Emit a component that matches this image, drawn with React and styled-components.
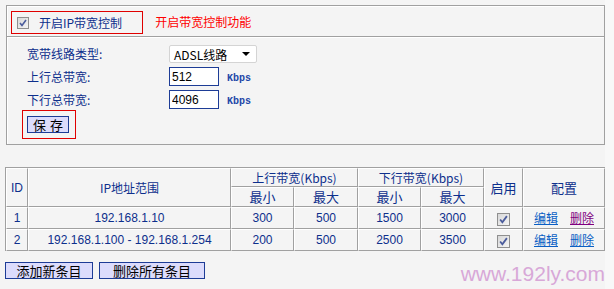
import React from 'react';
import styled, { createGlobalStyle } from 'styled-components';

const GlobalStyle = createGlobalStyle`
    html, body {
        margin: 0;
        padding: 0;
        background-color: #f4f4f4;
    }
    body {
        font-family: "Noto Sans CJK SC", "DejaVu Sans", sans-serif;
        font-size: 12px;
        color: #0d2f8c;
    }
`;

const Page = styled.div`
    position: relative;
    width: 614px;
    height: 289px;
    padding: 5px 9px 0 5px;
    box-sizing: border-box;
    background: linear-gradient(to right, #f4f4f4 605px, #f8f8f8 605px);
`;

const Panel = styled.div`
    margin-left: 1px;
    border: 1px solid #a0a0a0;
    box-shadow: inset 1px 1px 0 #ffffff;
    height: 140px;
    box-sizing: border-box;
    display: flex;
    flex-direction: column;
`;

const PanelHead = styled.div`
    height: 31px;
    box-sizing: border-box;
    padding: 5px 0 0 4px;
    display: flex;
    align-items: flex-start;
    gap: 12px;
    border-bottom: 1px solid #a0a0a0;
    box-shadow: 0 1px 0 #ffffff;
`;

const RedBox = styled.div`
    border: 1px solid #e00000;
    box-sizing: border-box;
    height: ${({ h }) => h || 'auto'};
    padding: ${({ pad }) => pad || '0'};
    display: inline-flex;
    align-items: center;
    gap: 10px;
`;

const HeadLabel = styled.span`
    font-size: 12px;
    color: #0d2f8c;
`;

const Note = styled.span`
    height: 23px;
    display: flex;
    align-items: center;
    margin-top: -1px;
    font-size: 12px;
    color: #ff0000;
`;

const Form = styled.div`
    padding: 8px 0 0 20px;
    display: grid;
    grid-template-columns: 142px auto;
    row-gap: 4px;
    align-items: center;
    justify-items: start;
`;

const Label = styled.span`
    color: #0d2f8c;
    line-height: 18px;
`;

const Field = styled.div`
    display: flex;
    align-items: center;
    gap: 8px;
`;

const Select = styled.div`
    width: 88px;
    height: 18px;
    box-sizing: border-box;
    background: #ffffff;
    border: 1px solid #d4d4d4;
    border-radius: 2px;
    color: #000000;
    padding: 0 6px 0 4px;
    display: flex;
    align-items: center;
    justify-content: space-between;
    font-size: 12px;
`;

const Arrow = styled.span`
    width: 0;
    height: 0;
    border-left: 4px solid transparent;
    border-right: 4px solid transparent;
    border-top: 4px solid #000000;
`;

const Input = styled.input`
    width: 50px;
    height: 19px;
    box-sizing: border-box;
    border: 1px solid #1d3c96;
    background: #ffffff;
    padding: 0 2px;
    font-family: "Liberation Sans", sans-serif;
    font-size: 12px;
    color: #000000;
    outline: none;
`;

const Unit = styled.span`
    padding-top: 4px;
    font-family: "Liberation Mono", monospace;
    font-weight: bold;
    font-size: 10px;
    color: #1d47a8;
`;

const SaveWrap = styled.div`
    grid-column: 1 / 3;
    margin: -3px 0 0 -5px;
`;

const Button = styled.button`
    width: ${({ w }) => w}px;
    height: 17px;
    box-sizing: border-box;
    padding: 0;
    background: #dcdcfc;
    border: 1px solid #1d3c96;
    font-family: "Noto Sans CJK SC", sans-serif;
    font-size: 13px;
    line-height: 15px;
    color: #000000;
    letter-spacing: ${({ spaced }) => (spaced ? '4px' : '0')};
    text-indent: ${({ spaced }) => (spaced ? '4px' : '0')};
`;

const Table = styled.table`
    margin-top: 22px;
    width: 600px;
    table-layout: fixed;
    border-collapse: separate;
    border-spacing: 0;
    border-left: 1px solid #a0a0a0;
    border-top: 1px solid #a0a0a0;
`;

const Cell = styled.td`
    height: ${({ h }) => h || 21}px;
    padding: 0;
    text-align: center;
    vertical-align: middle;
    box-sizing: border-box;
    border-left: 1px solid #ffffff;
    border-top: 1px solid #ffffff;
    border-right: 1px solid #a0a0a0;
    border-bottom: 1px solid #a0a0a0;
    color: #0d2f8c;
    font-family: ${({ num }) => (num ? '"Liberation Sans", sans-serif' : '"Noto Sans CJK SC", sans-serif')};
    font-size: 12px;
    line-height: 14px;
    white-space: nowrap;
`;

const Head = styled(Cell).attrs({ as: 'th' })`
    font-weight: normal;
    font-size: ${({ big }) => (big ? 13 : 12)}px;
`;

const Links = styled.div`
    display: flex;
    justify-content: center;
    gap: 12px;
`;

const Link = styled.a`
    color: ${({ visited }) => (visited ? '#800080' : '#0a5fc4')};
    text-decoration: underline;
    font-size: 12px;
    cursor: pointer;
`;

const Box = styled.span`
    display: inline-flex;
    align-items: center;
    justify-content: center;
    width: ${({ s }) => s}px;
    height: ${({ s }) => s}px;
    box-sizing: border-box;
    border: 1px solid #8f8f8f;
    background: linear-gradient(135deg, #d8d8d8, #f4f4f4);
    vertical-align: middle;
`;

const Actions = styled.div`
    margin-top: 11px;
    display: flex;
    gap: 6px;
`;

const Watermark = styled.div`
    position: absolute;
    right: 9px;
    bottom: 3px;
    font-family: "Liberation Sans", Arial, sans-serif;
    font-size: 21px;
    color: #d8a8d8;
`;

function Check({ s = 12 }) {
    return (
        <Box s={s}>
            <svg width={s - 4} height={s - 4} viewBox="0 0 8 8">
                <polyline points="1,4 3,6.5 7,1" fill="none" stroke="#4b5c9c" strokeWidth="1.6" />
            </svg>
        </Box>
    );
}

const rows = [
    { id: 1, range: '192.168.1.10', upMin: 300, upMax: 500, downMin: 1500, downMax: 3000, visited: true },
    { id: 2, range: '192.168.1.100 - 192.168.1.254', upMin: 200, upMax: 500, downMin: 2500, downMax: 3500 },
];

function App() {
    return (
        <Page>
            <GlobalStyle />
            <Panel>
                <PanelHead>
                    <RedBox h="23px" pad="0 20px 0 5px">
                        <Check s={12} />
                        <HeadLabel>开启IP带宽控制</HeadLabel>
                    </RedBox>
                    <Note>开启带宽控制功能</Note>
                </PanelHead>
                <Form>
                    <Label>宽带线路类型:</Label>
                    <Select>ADSL线路<Arrow /></Select>
                    <Label>上行总带宽:</Label>
                    <Field><Input defaultValue="512" /><Unit>Kbps</Unit></Field>
                    <Label>下行总带宽:</Label>
                    <Field><Input defaultValue="4096" /><Unit>Kbps</Unit></Field>
                    <SaveWrap>
                        <RedBox pad="5px 6px 5px 4px">
                            <Button w={42} spaced>保存</Button>
                        </RedBox>
                    </SaveWrap>
                </Form>
            </Panel>

            <Table>
                <colgroup>
                    <col style={{ width: 22 }} />
                    <col style={{ width: 203 }} />
                    <col style={{ width: 63 }} />
                    <col style={{ width: 64 }} />
                    <col style={{ width: 63 }} />
                    <col style={{ width: 63 }} />
                    <col style={{ width: 39 }} />
                    <col style={{ width: 82 }} />
                </colgroup>
                <thead>
                    <tr>
                        <Head rowSpan={2} num>ID</Head>
                        <Head rowSpan={2}>IP地址范围</Head>
                        <Head colSpan={2} h={19}>上行带宽(Kbps)</Head>
                        <Head colSpan={2} h={19}>下行带宽(Kbps)</Head>
                        <Head rowSpan={2} big>启用</Head>
                        <Head rowSpan={2} big>配置</Head>
                    </tr>
                    <tr>
                        <Head h={20} big>最小</Head>
                        <Head h={20} big>最大</Head>
                        <Head h={20} big>最小</Head>
                        <Head h={20} big>最大</Head>
                    </tr>
                </thead>
                <tbody>
                    {rows.map((r) => (
                        <tr key={r.id}>
                            <Cell h={22} num>{r.id}</Cell>
                            <Cell h={22} num>{r.range}</Cell>
                            <Cell h={22} num>{r.upMin}</Cell>
                            <Cell h={22} num>{r.upMax}</Cell>
                            <Cell h={22} num>{r.downMin}</Cell>
                            <Cell h={22} num>{r.downMax}</Cell>
                            <Cell h={22}><Check s={13} /></Cell>
                            <Cell h={22}>
                                <Links>
                                    <Link>编辑</Link>
                                    <Link visited={r.visited}>删除</Link>
                                </Links>
                            </Cell>
                        </tr>
                    ))}
                </tbody>
            </Table>

            <Actions>
                <Button w={88}>添加新条目</Button>
                <Button w={106}>删除所有条目</Button>
            </Actions>

            <Watermark>www.192ly.com</Watermark>
        </Page>
    );
}

export default App;
